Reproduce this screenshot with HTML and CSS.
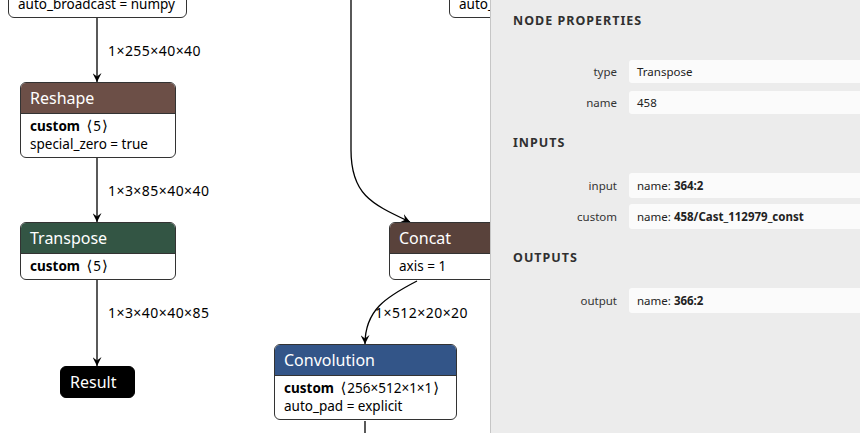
FILE: index.html
```html
<!DOCTYPE html>
<html>
<head>
<meta charset="utf-8">
<link rel="stylesheet" href="styles.css">
</head>
<body>
<div class="app">
  <div class="graph">
    <svg class="edges" width="490" height="433" viewBox="0 0 490 433">
      <defs>
        <marker id="arrow" viewBox="0 0 10 10" refX="10" refY="5" markerWidth="9" markerHeight="9" markerUnits="userSpaceOnUse" orient="auto">
          <path d="M0 0 L10 5 L0 10 L4 5 z" fill="#000"/>
        </marker>
      </defs>
      <path class="edge" d="M97 18 L97 82" marker-end="url(#arrow)"/>
      <path class="edge" d="M97 158 L97 222" marker-end="url(#arrow)"/>
      <path class="edge" d="M97 280 L97 366" marker-end="url(#arrow)"/>
      <path class="edge" d="M351 0 L351 150 C351 195 372 204 410 222" marker-end="url(#arrow)"/>
      <path class="edge" d="M417 281 C386 297 365 310 365 344" marker-end="url(#arrow)"/>
      <path class="edge" d="M365 421 L365 433"/>
      <text class="edge-label" x="108" y="56">1×255×40×40</text>
      <text class="edge-label" x="108" y="196">1×3×85×40×40</text>
      <text class="edge-label" x="108" y="318">1×3×40×40×85</text>
      <text class="edge-label" x="375" y="318">1×512×20×20</text>
    </svg>

    <div class="node" style="left:8px; top:-9px; width:179px;">
      <div class="node-body"><div>auto_broadcast = numpy</div></div>
    </div>
    <div class="node" style="left:449px; top:-9px; width:160px;">
      <div class="node-body"><div>auto_broadcast = numpy</div></div>
    </div>

    <div class="node" style="left:20px; top:82px; width:156px;">
      <div class="node-head shape">Reshape</div>
      <div class="node-body">
        <div><b>custom</b> <span class="br">⟨</span>5<span class="br">⟩</span></div>
        <div>special_zero = true</div>
      </div>
    </div>

    <div class="node" style="left:20px; top:222px; width:156px;">
      <div class="node-head transform">Transpose</div>
      <div class="node-body">
        <div><b>custom</b> <span class="br">⟨</span>5<span class="br">⟩</span></div>
      </div>
    </div>

    <div class="result" style="left:60px; top:366px;">Result</div>

    <div class="node" style="left:389px; top:222px; width:160px;">
      <div class="node-head tensor">Concat</div>
      <div class="node-body">
        <div>axis = 1</div>
      </div>
    </div>

    <div class="node" style="left:274px; top:344px; width:183px;">
      <div class="node-head layer">Convolution</div>
      <div class="node-body">
        <div><b>custom</b> <span class="br">⟨</span>256×512×1×1<span class="br">⟩</span></div>
        <div>auto_pad = explicit</div>
      </div>
    </div>
  </div>

  <aside class="sidebar">
    <div class="sidebar-inner">
      <div class="section-title first">NODE PROPERTIES</div>
      <div class="rows">
        <div class="row"><div class="label">type</div><div class="value">Transpose</div></div>
        <div class="row"><div class="label">name</div><div class="value">458</div></div>
      </div>
      <div class="section-title">INPUTS</div>
      <div class="rows">
        <div class="row tall"><div class="label">input</div><div class="value">name: <b>364:2</b></div></div>
        <div class="row tall"><div class="label">custom</div><div class="value">name: <b>458/Cast_112979_const</b></div></div>
      </div>
      <div class="section-title">OUTPUTS</div>
      <div class="rows">
        <div class="row tall"><div class="label">output</div><div class="value">name: <b>366:2</b></div></div>
      </div>
    </div>
  </aside>
</div>
</body>
</html>
```

FILE: styles.css
```css
html, body {
  margin: 0;
  padding: 0;
  background: #fff;
}
body {
  font-family: "Noto Sans", "DejaVu Sans", sans-serif;
  width: 860px;
  height: 433px;
  overflow: hidden;
}
.app {
  display: flex;
  width: 860px;
  height: 433px;
}
.graph {
  position: relative;
  width: 490px;
  height: 433px;
  flex: none;
  overflow: hidden;
  background: #fff;
}
.edges {
  position: absolute;
  left: 0;
  top: 0;
}
.edge {
  fill: none;
  stroke: #000;
  stroke-width: 1.3;
}
.edge-label {
  font-family: "Noto Sans", "DejaVu Sans", sans-serif;
  font-size: 14px;
  letter-spacing: 0.45px;
  fill: #000;
}
.node {
  position: absolute;
  box-sizing: border-box;
  border: 1px solid #333;
  border-radius: 6px;
  background: #fff;
  overflow: hidden;
  color: #000;
}
.node-head {
  height: 30px;
  line-height: 30px;
  padding-left: 9px;
  font-size: 16px;
  color: #fff;
  white-space: nowrap;
}
.node-head.shape { background: #6c4f47; }
.node-head.transform { background: #335544; }
.node-head.tensor { background: #59423b; }
.node-head.layer { background: #335588; }
.node-head + .node-body {
  border-top: 1px solid #333;
}
.node-body {
  padding: 3px 9px 4px;
  font-size: 13.5px;
  line-height: 18px;
  white-space: nowrap;
}
.node-body b {
  font-weight: 700;
  margin-right: 2px;
}
.br {
  font-family: "DejaVu Sans", sans-serif;
  font-size: 15px;
  line-height: 18px;
  margin: 0 1px;
}
.result {
  position: absolute;
  box-sizing: border-box;
  width: 75px;
  height: 32px;
  line-height: 30px;
  padding-left: 9px;
  border: 1px solid #000;
  border-radius: 6px;
  background: #000;
  color: #fff;
  font-size: 16px;
}
.sidebar {
  flex: none;
  width: 370px;
  height: 433px;
  box-sizing: border-box;
  border-left: 1px solid #c6c6c6;
  background: #ececec;
  overflow: hidden;
}
.sidebar-inner {
  width: 500px;
  padding-left: 22px;
  color: #333;
  font-size: 11.5px;
}
.section-title {
  font-weight: 700;
  font-size: 12.5px;
  letter-spacing: 1px;
  line-height: 20px;
  color: #303030;
  margin: 19px 0 20px;
}
.section-title.first {
  margin: 11px 0 29px;
}
.rows {
  display: flex;
  flex-direction: column;
  gap: 8px;
}
.row {
  display: grid;
  grid-template-columns: 104px 1fr;
  column-gap: 12px;
  height: 23px;
}
.rows:has(.tall) {
  gap: 6px;
}
.row.tall {
  height: 25px;
}
.label {
  text-align: right;
  align-self: center;
  color: #333;
}
.value {
  background: #fbfbfb;
  border-radius: 3px;
  padding-left: 8px;
  display: flex;
  align-items: center;
  color: #222;
}
.value b {
  font-weight: 700;
  margin-left: 3px;
}
```
